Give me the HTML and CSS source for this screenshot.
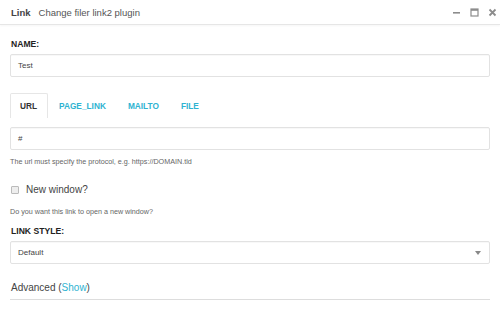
FILE: index.html
```
<!DOCTYPE html>
<html>
<head>
	<meta charset="UTF-8">
	<title>Link</title>
<link rel="stylesheet" href="styles.css">
</head>
<body>
	<div class="dialog">
		<header class="head">
			<span class="head-title">Link</span>
			<span class="head-sub">Change filer link2 plugin</span>
			<div class="head-tools">
				<a href="javascript:;" class="tool"><svg width="9" height="9" viewBox="0 0 9 9"><rect x="1" y="4" width="7" height="1.6" fill="#8c8c8c"/></svg></a>
				<a href="javascript:;" class="tool"><svg width="9" height="9" viewBox="0 0 9 9"><rect x="1" y="1" width="7" height="7" fill="none" stroke="#8c8c8c" stroke-width="1.2"/><rect x="1" y="1" width="7" height="1.8" fill="#8c8c8c"/></svg></a>
				<a href="javascript:;" class="tool"><svg width="9" height="9" viewBox="0 0 9 9"><path d="M1.5 1.5L7.5 7.5M7.5 1.5L1.5 7.5" stroke="#8c8c8c" stroke-width="1.8"/></svg></a>
			</div>
		</header>
		<div class="body">
			<div class="field">
				<label class="label">Name:</label>
				<div class="input">Test</div>
			</div>
			<nav class="tabs">
				<a href="javascript:;" class="tab active">URL</a>
				<a href="javascript:;" class="tab">PAGE_LINK</a>
				<a href="javascript:;" class="tab">MAILTO</a>
				<a href="javascript:;" class="tab">FILE</a>
			</nav>
			<div class="input">#</div>
			<p class="help">The url must specify the protocol, e.g. https://DOMAIN.tld</p>
			<label class="check"><span class="box"></span>New window?</label>
			<p class="help">Do you want this link to open a new window?</p>
			<div class="field">
				<label class="label">Link style:</label>
				<div class="input select">Default<span class="caret"></span></div>
			</div>
			<div class="advanced">Advanced (<a href="javascript:;">Show</a>)</div>
		</div>
	</div>
</body>
</html>
```
FILE: styles.css
```
html,body{
	margin: 0;
	background: #fff;
	overflow: hidden;
}
body{
	font-family: "Liberation Sans", Arial, sans-serif;
	color: #333;
}
.dialog{
	width: 500px;
	height: 310px;
}
.head{
	height: 24px;
	border-bottom: 1px solid #e6e6e6;
	box-shadow: 0 1px 2px rgba(0,0,0,.04);
	display: flex;
	align-items: center;
	padding: 0 0 0 11px;
}
.head-title{
	font-size: 9.5px;
	font-weight: bold;
	color: #444;
	margin-right: 8px;
}
.head-sub{
	font-size: 9.5px;
	color: #555;
}
.head-tools{
	margin-left: auto;
	display: flex;
	gap: 9px;
	padding-right: 3px;
}
.tool{
	display: block;
	width: 9px;
	height: 9px;
}
.tool svg{
	display: block;
}
.body{
	padding: 14px 10px 0 10px;
}
.field{
	display: flex;
	flex-direction: column;
}
.label{
	font-size: 8.6px;
	font-weight: bold;
	text-transform: uppercase;
	color: #222;
	margin: 0 0 5px 1px;
}
.input{
	height: 21px;
	border: 1px solid #e2e2e2;
	border-radius: 2px;
	box-shadow: inset 0 1px 1px rgba(0,0,0,.03);
	font-size: 8px;
	color: #444;
	display: flex;
	align-items: center;
	padding: 0 7px;
	position: relative;
}
.tabs{
	display: flex;
	margin: 16px 0 9px;
	height: 25px;
}
.tab{
	font-size: 8.3px;
	font-weight: bold;
	color: #2fb3d1;
	text-decoration: none;
	padding: 0 10px;
	display: flex;
	align-items: center;
	border: 1px solid transparent;
	border-bottom: 0;
	border-radius: 2px 2px 0 0;
}
.tab.active{
	color: #333;
	border-color: #e6e6e6;
	padding: 0 9px;
	width: 18px;
}
.help{
	font-size: 7.2px;
	color: #666;
	margin: 7px 0 0 0;
}
.check{
	display: flex;
	align-items: center;
	font-size: 10px;
	color: #444;
	margin: 18px 0 0 1px;
}
.box{
	width: 6px;
	height: 6px;
	border: 1px solid #bbb;
	border-radius: 1px;
	background: #eee;
	margin-right: 7px;
}
.check + .help{
	margin-top: 12px;
}
.check + .help + .field{
	margin-top: 10px;
}
.select{
	padding-right: 10px;
}
.caret{
	position: absolute;
	right: 8px;
	top: 9px;
	width: 0;
	height: 0;
	border-left: 3.5px solid transparent;
	border-right: 3.5px solid transparent;
	border-top: 4px solid #888;
}
.advanced{
	margin-top: 18px;
	font-size: 10px;
	color: #444;
	padding: 0 0 6px 1px;
	border-bottom: 1px solid #ddd;
}
.advanced a{
	color: #2fb3d1;
	text-decoration: none;
}
```
